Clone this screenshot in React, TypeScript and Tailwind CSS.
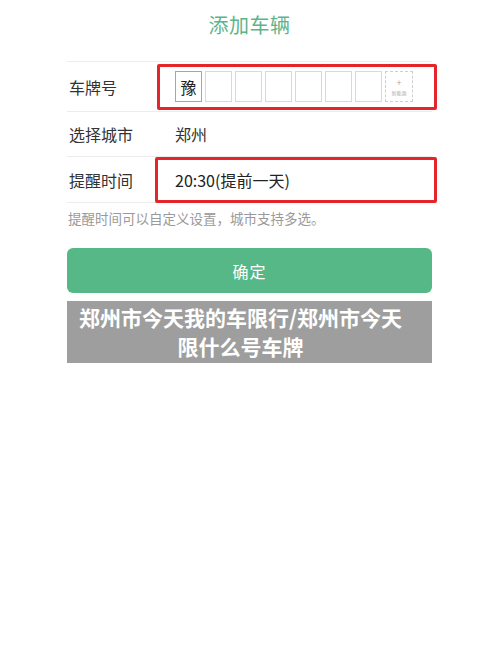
import React from 'react';

const font = { fontFamily: '"Noto Sans CJK SC", "Noto Sans", sans-serif' };

function PlateCells() {
  const empty = [0, 1, 2, 3, 4, 5];
  return (
    <div className="flex items-center gap-[3px]">
      <div className="w-[27px] h-[31px] border border-[#8ea9d8] flex items-center justify-center text-[16px] text-[#222]">
        豫
      </div>
      {empty.map(i => (
        <div key={i} className="w-[27px] h-[31px] border border-[#d9d9d9]" />
      ))}
      <div className="w-[28px] h-[31px] border border-dashed border-[#cfcfcf] flex flex-col items-center justify-center leading-none">
        <span className="text-[9px] text-[#aaa]">+</span>
        <span className="text-[5px] text-[#aaa] mt-[3px]">新能源</span>
      </div>
    </div>
  );
}

export default function App() {
  return (
    <div className="w-[500px] h-[666px] bg-white" style={font}>
      <div className="ml-[67px] w-[365px]">
        {/* Title */}
        <div className="h-[61px] flex items-start justify-center pt-[11px]">
          <h1 className="text-[20px] leading-[28px] text-[#5cb48a] tracking-[0.5px]">添加车辆</h1>
        </div>

        {/* Plate row */}
        <div className="h-[51px] border-t border-b border-[#ececec] flex items-center">
          <span className="w-[90px] pl-[2px] text-[16px] text-[#333]">车牌号</span>
          <div className="-mr-[5px] flex-1 h-[46px] border-[3px] border-[#e4262b] rounded-[2px] flex items-center pl-[15px]">
            <PlateCells />
          </div>
        </div>

        {/* City row */}
        <div className="h-[45px] border-b border-[#ececec] flex items-center">
          <span className="w-[108px] pl-[2px] text-[16px] text-[#333]">选择城市</span>
          <span className="text-[16px] text-[#333]">郑州</span>
        </div>

        {/* Reminder row */}
        <div className="h-[46px] border-b border-[#ececec] flex items-center">
          <span className="w-[88px] pl-[2px] text-[16px] text-[#333]">提醒时间</span>
          <div className="-mr-[5px] flex-1 h-[46px] border-[3px] border-[#e4262b] rounded-[2px] flex items-center pl-[17px]">
            <span className="text-[16px] text-[#222]">20:30(提前一天)</span>
          </div>
        </div>

        {/* Hint */}
        <p className="pt-[5px] pl-[1px] text-[13.5px] leading-[20px] text-[#9a9a9a]">
          提醒时间可以自定义设置，城市支持多选。
        </p>

        {/* Confirm button */}
        <button className="mt-[20px] w-full h-[45px] rounded-[6px] bg-[#57b887] text-white text-[16px] flex items-center justify-center tracking-[1px]">
          确定
        </button>

        {/* Overlay banner */}
        <div className="mt-[8px] h-[62px] bg-[#9e9e9e] pl-[3px] pr-[21px] pt-[2px]">
          <p className="text-center text-white font-bold text-[21px] leading-[29px]">
            郑州市今天我的车限行/郑州市今天<br />限什么号车牌
          </p>
        </div>
      </div>
    </div>
  );
}
